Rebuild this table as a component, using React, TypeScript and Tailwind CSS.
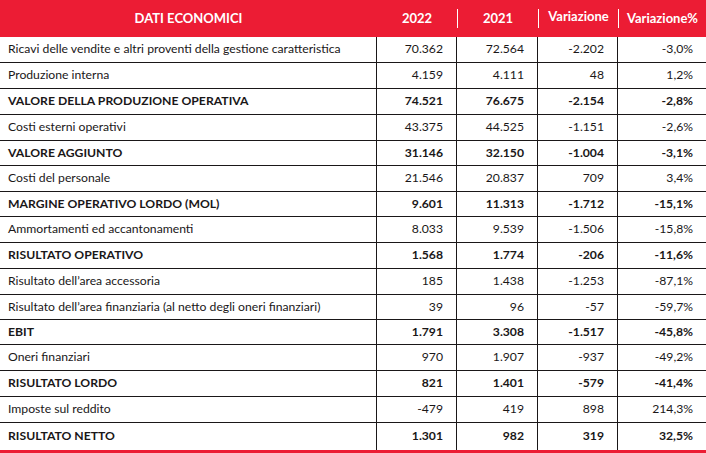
const rows: { label: string; v22: string; v21: string; d: string; p: string; bold?: boolean; h: number }[] = [
  { label: "Ricavi delle vendite e altri proventi della gestione caratteristica", v22: "70.362", v21: "72.564", d: "-2.202", p: "-3,0%", h: 26 },
  { label: "Produzione interna", v22: "4.159", v21: "4.111", d: "48", p: "1,2%", h: 26 },
  { label: "VALORE DELLA PRODUZIONE OPERATIVA", v22: "74.521", v21: "76.675", d: "-2.154", p: "-2,8%", bold: true, h: 26 },
  { label: "Costi esterni operativi", v22: "43.375", v21: "44.525", d: "-1.151", p: "-2,6%", h: 26 },
  { label: "VALORE AGGIUNTO", v22: "31.146", v21: "32.150", d: "-1.004", p: "-3,1%", bold: true, h: 25 },
  { label: "Costi del personale", v22: "21.546", v21: "20.837", d: "709", p: "3,4%", h: 26 },
  { label: "MARGINE OPERATIVO LORDO (MOL)", v22: "9.601", v21: "11.313", d: "-1.712", p: "-15,1%", bold: true, h: 25 },
  { label: "Ammortamenti ed accantonamenti", v22: "8.033", v21: "9.539", d: "-1.506", p: "-15,8%", h: 26 },
  { label: "RISULTATO OPERATIVO", v22: "1.568", v21: "1.774", d: "-206", p: "-11,6%", bold: true, h: 26 },
  { label: "Risultato dell’area accessoria", v22: "185", v21: "1.438", d: "-1.253", p: "-87,1%", h: 26 },
  { label: "Risultato dell’area finanziaria (al netto degli oneri finanziari)", v22: "39", v21: "96", d: "-57", p: "-59,7%", h: 25 },
  { label: "EBIT", v22: "1.791", v21: "3.308", d: "-1.517", p: "-45,8%", bold: true, h: 25 },
  { label: "Oneri finanziari", v22: "970", v21: "1.907", d: "-937", p: "-49,2%", h: 26 },
  { label: "RISULTATO LORDO", v22: "821", v21: "1.401", d: "-579", p: "-41,4%", bold: true, h: 26 },
  { label: "Imposte sul reddito", v22: "-479", v21: "419", d: "898", p: "214,3%", h: 26 },
  { label: "RISULTATO NETTO", v22: "1.301", v21: "982", d: "319", p: "32,5%", bold: true, h: 27 },
];

function Cell({ children, w, last }: { children: React.ReactNode; w: string; last?: boolean }) {
  return (
    <div className={`${w} flex items-center justify-end pr-[13px] ${last ? "" : "border-r border-[#1a1718]"}`}>
      {children}
    </div>
  );
}

export default function App() {
  return (
    <div className="w-[706px] h-[453px] bg-white overflow-hidden text-[#1a1718]" style={{ fontFamily: "Lato, 'Open Sans', sans-serif" }}>
      <div className="flex h-[37px] bg-[#ec1c34] text-white font-bold text-[13px]">
        <div className="w-[377px] flex items-center justify-center">DATI ECONOMICI</div>
        <div className="w-[80px] flex items-center justify-center">2022</div>
        <div className="w-[1px] bg-white my-[9px]" />
        <div className="w-[80px] flex items-center justify-center">2021</div>
        <div className="w-[1px] bg-white my-[9px]" />
        <div className="w-[79px] flex items-center justify-center pb-[3px]">Variazione</div>
        <div className="w-[1px] bg-white my-[9px]" />
        <div className="flex-1 flex items-center justify-center">Variazione%</div>
      </div>
      {rows.map((r, i) => (
        <div
          key={i}
          className={`flex text-[12.2px] ${r.bold ? "font-bold" : ""} ${i < rows.length - 1 ? "border-b border-[#1a1718]" : ""}`}
          style={{ height: r.h }}
        >
          <div className="w-[377px] flex items-center pl-[8px] border-r border-[#1a1718]">{r.label}</div>
          <Cell w="w-[80px]">{r.v22}</Cell>
          <Cell w="w-[81px]">{r.v21}</Cell>
          <Cell w="w-[80px]">{r.d}</Cell>
          <Cell w="flex-1" last>{r.p}</Cell>
        </div>
      ))}
      <div className="h-[4px] bg-[#ec1c34]" />
    </div>
  );
}
